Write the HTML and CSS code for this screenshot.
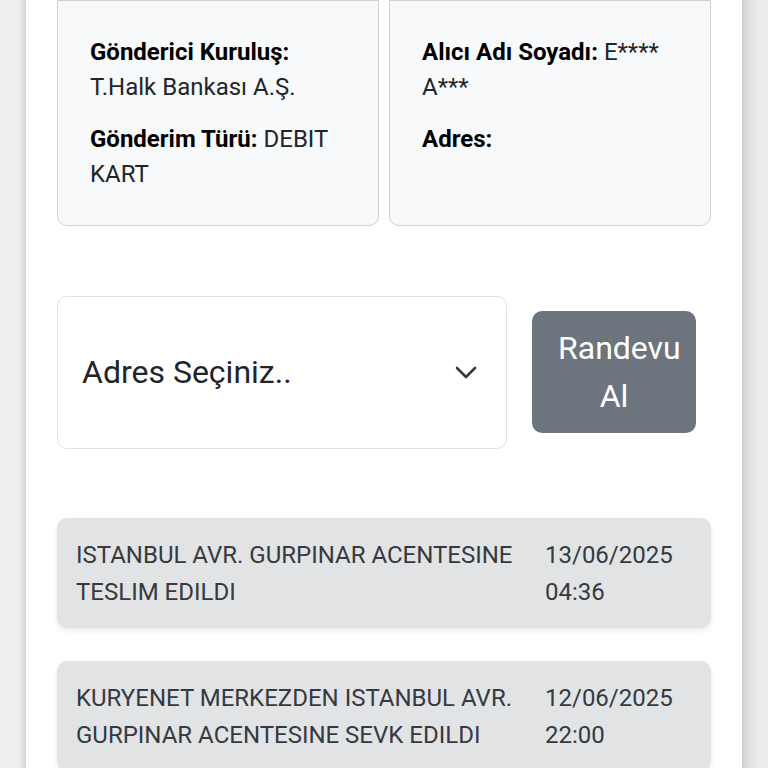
FILE: index.html
```html
<!DOCTYPE html>
<html lang="tr">
<head>
<meta charset="utf-8">
<link rel="stylesheet" href="styles.css">
</head>
<body>
<div class="page">
  <div class="info-row">
    <div class="info-card">
      <p><b>Gönderici Kuruluş:</b> T.Halk Bankası A.Ş.</p>
      <p><b>Gönderim Türü:</b> DEBIT KART</p>
    </div>
    <div class="info-card">
      <p><b>Alıcı Adı Soyadı:</b> E**** A***</p>
      <p><b>Adres:</b></p>
    </div>
  </div>

  <div class="action-row">
    <div class="select">
      <span class="select-text">Adres Seçiniz..</span>
      <svg class="chevron" width="22" height="14" viewBox="0 0 22 14"><path d="M2 2 L11 11 L20 2" fill="none" stroke="#343a40" stroke-width="2.6" stroke-linecap="round" stroke-linejoin="round"/></svg>
    </div>
    <button class="btn">Randevu Al</button>
  </div>

  <div class="timeline">
    <div class="event">
      <div class="event-text">ISTANBUL AVR. GURPINAR ACENTESINE TESLIM EDILDI</div>
      <div class="event-date">13/06/2025 04:36</div>
    </div>
    <div class="event">
      <div class="event-text">KURYENET MERKEZDEN ISTANBUL AVR. GURPINAR ACENTESINE SEVK EDILDI</div>
      <div class="event-date">12/06/2025 22:00</div>
    </div>
  </div>
</div>
</body>
</html>
```

FILE: styles.css
```css
html, body {
  margin: 0;
  padding: 0;
}
body {
  background: linear-gradient(to right, #efefef 0, #efefef 18px, #d6d6d6 26px, #ffffff 26px, #ffffff 742px, #cfcfcf 742px, #e2e2e2 750px, #ededed 760px);
  font-family: Roboto, "Noto Sans", sans-serif;
  color: #212529;
  overflow: hidden;
  height: 768px;
}
.page {
  margin: 0 26px;
  background: #fff;
  height: 768px;
  padding: 0 31px;
  box-sizing: border-box;
}
.info-row {
  display: grid;
  grid-template-columns: 1fr 1fr;
  column-gap: 10px;
}
.info-card {
  background: #f8f9fa;
  border: 1px solid #cdcfd1;
  border-radius: 0 0 10px 10px;
  padding: 34px 32px 33px;
  font-size: 24px;
  line-height: 35px;
}
.info-card p {
  margin: 0 0 17px;
}
.info-card p:last-child {
  margin-bottom: 0;
}
.info-card b {
  font-weight: 700;
  color: #000;
}
.action-row {
  display: flex;
  align-items: center;
  margin-top: 70px;
}
.select {
  width: 450px;
  height: 153px;
  box-sizing: border-box;
  border: 1px solid #dee2e6;
  border-radius: 10px;
  background: #fff;
  display: flex;
  align-items: center;
  justify-content: space-between;
  padding: 0 29px 0 24px;
}
.select-text {
  font-size: 32px;
  color: #212529;
  margin-top: -1px;
}
.chevron {
  display: block;
  margin-top: 1px;
}
.btn {
  margin-left: 25px;
  width: 164px;
  height: 122px;
  border: 0;
  border-radius: 10px;
  background: #6c757d;
  color: #fff;
  font-family: Roboto, "Noto Sans", sans-serif;
  font-size: 32px;
  line-height: 48px;
  padding: 0 26px;
  margin-top: -2px;
}
.timeline {
  margin-top: 69px;
  display: flex;
  flex-direction: column;
  gap: 33px;
}
.event {
  background: #e2e3e5;
  border-radius: 10px;
  box-shadow: 0 3px 6px rgba(0, 0, 0, 0.08);
  padding: 19px 19px 17px;
  display: grid;
  grid-template-columns: 1fr 147px;
  column-gap: 14px;
  font-size: 24px;
  line-height: 37px;
  color: #343a40;
}
```
